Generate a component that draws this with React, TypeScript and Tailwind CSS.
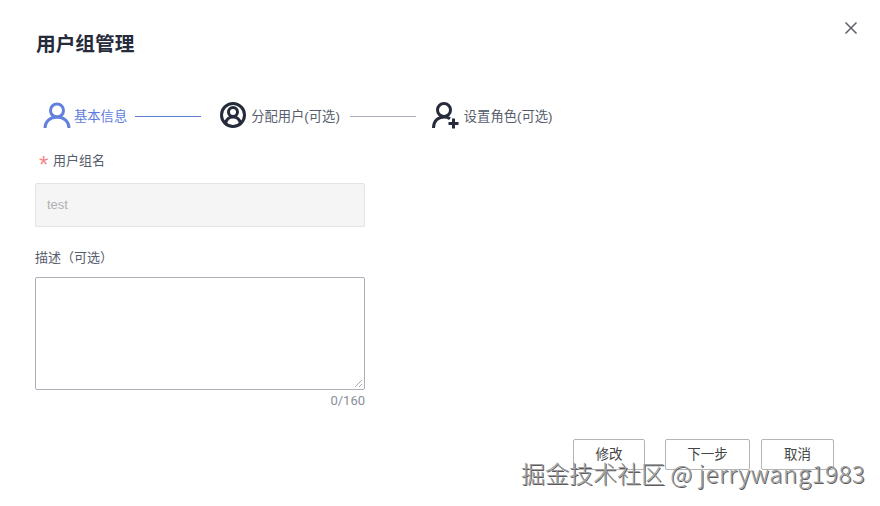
import React from "react";

const FONT = '"Liberation Sans", "Noto Sans CJK SC", sans-serif';

function UserIcon({ color }: { color: string }) {
  return (
    <svg width="28" height="28" viewBox="0 0 28 28" fill="none" stroke={color} strokeWidth="3">
      <circle cx="14" cy="9.5" r="6.5" />
      <path d="M2 27c0-6.5 5-11 12-11s12 4.500 12 11" />
    </svg>
  );
}

function CircleUserIcon({ color }: { color: string }) {
  return (
    <svg width="28" height="28" viewBox="0 0 28 28" fill="none" stroke={color} strokeWidth="3">
      <circle cx="14" cy="14" r="11.500" />
      <circle cx="14" cy="11" r="4.500" />
      <path d="M6.500 22.500c.8-4 3.700-6.500 7.500-6.500s6.700 2.500 7.500 6.500" />
    </svg>
  );
}

function UserPlusIcon({ color }: { color: string }) {
  return (
    <svg width="28" height="28" viewBox="0 0 28 28" fill="none" stroke={color}>
      <circle cx="12" cy="9" r="6.500" strokeWidth="3" />
      <path d="M1.500 27c0-6.500 4-11 10.500-11 2.500 0 4.500.6 6 1.700" strokeWidth="3" />
      <path d="M21.500 17.500v10M16.500 22.500h10" strokeWidth="3" />
    </svg>
  );
}

function Button({ label, width }: { label: string; width: string }) {
  return (
    <button className={`${width} h-[31px] rounded-[2px] border border-[#b4b4b4] bg-white pt-[2px] text-[13.5px] text-[#444]`}>
      {label}
    </button>
  );
}

export default function App() {
  return (
    <div className="relative flex h-[506px] w-[880px] flex-col overflow-hidden bg-white pl-[35px]" style={{ fontFamily: FONT }}>
      <button className="absolute right-[22px] top-[21px] text-[#5f5f66]" aria-label="close">
        <svg width="14" height="14" viewBox="0 0 14 14" stroke="currentColor" strokeWidth="1.500">
          <path d="M1.500 1.500l11 11M12.500 1.500l-11 11" />
        </svg>
      </button>

      <h1 className="mt-[32px] pl-px text-[19.7px] font-bold leading-[24px] text-[#252b3a]">用户组管理</h1>

      <div className="mt-[44px] flex h-[30px] items-center pl-[8px] text-[13.3px]">
        <UserIcon color="#6380dd" />
        <span className="ml-[3px] mt-[4px] text-[#5e7ce0]">基本信息</span>
        <div className="ml-[8px] mt-[2px] h-px w-[66px] bg-[#5f7fd0]" />
        <div className="ml-[18px]"><CircleUserIcon color="#252b3a" /></div>
        <span className="ml-[4px] mt-[4px] text-[#575d6c]">分配用户(可选)</span>
        <div className="ml-[10px] mt-[2px] h-px w-[66px] bg-[#adb0b8]" />
        <div className="ml-[16px]"><UserPlusIcon color="#252b3a" /></div>
        <span className="ml-[4px] mt-[4px] text-[#575d6c]">设置角色(可选)</span>
      </div>

      <div className="mt-[21px] flex h-[20px] items-center pl-[4px] text-[13px] text-[#575d6c]">
        <span className="mr-[4px] mt-[8px] w-[10px] text-[24px] leading-none text-[#f08a8a]">*</span>
        用户组名
      </div>

      <div className="mt-[12px] flex h-[44px] w-[330px] items-center rounded-[2px] border border-[#e3e3e3] bg-[#f5f5f5] px-[11px] text-[13px] text-[#b0b0b0]">
        test
      </div>

      <div className="mt-[21px] h-[20px] text-[13px] leading-[20px] text-[#575d6c]">描述（可选）</div>

      <div className="relative mt-[9px] h-[113px] w-[330px]">
        <textarea
          className="block h-full w-full resize-none rounded-[2px] border border-[#adb0b8] bg-white outline-none"
          defaultValue=""
        />
        <svg className="absolute bottom-[2px] right-[2px]" width="9" height="9" viewBox="0 0 9 9" stroke="#a8a8a8" strokeWidth="1">
          <path d="M1 8l7-7M5 8l3-3" />
        </svg>
      </div>

      <div className="mt-[2px] h-[18px] w-[330px] text-right text-[13px] leading-[18px] text-[#8a8e99]" style={{ fontFamily: 'Roboto, sans-serif' }}>
        0/160
      </div>

      <div className="mt-[29px] flex w-[799px] justify-end">
        <Button label="修改" width="w-[72px]" />
        <div className="ml-[20px]"><Button label="下一步" width="w-[85px]" /></div>
        <div className="ml-[11px]"><Button label="取消" width="w-[73px]" /></div>
      </div>

      <div
        className="absolute left-[521px] top-[458px] whitespace-nowrap text-[24px] leading-[30px] text-[#a0a0a0] [text-shadow:1px_1px_0_#5c5c5c]"
        style={{ fontFamily: '"Noto Sans CJK SC", "Liberation Sans", sans-serif', fontWeight: 300 }}
      >
        掘金技术社区 <span className="tracking-[0.6px]">@ jerrywang1983</span>
      </div>
    </div>
  );
}
